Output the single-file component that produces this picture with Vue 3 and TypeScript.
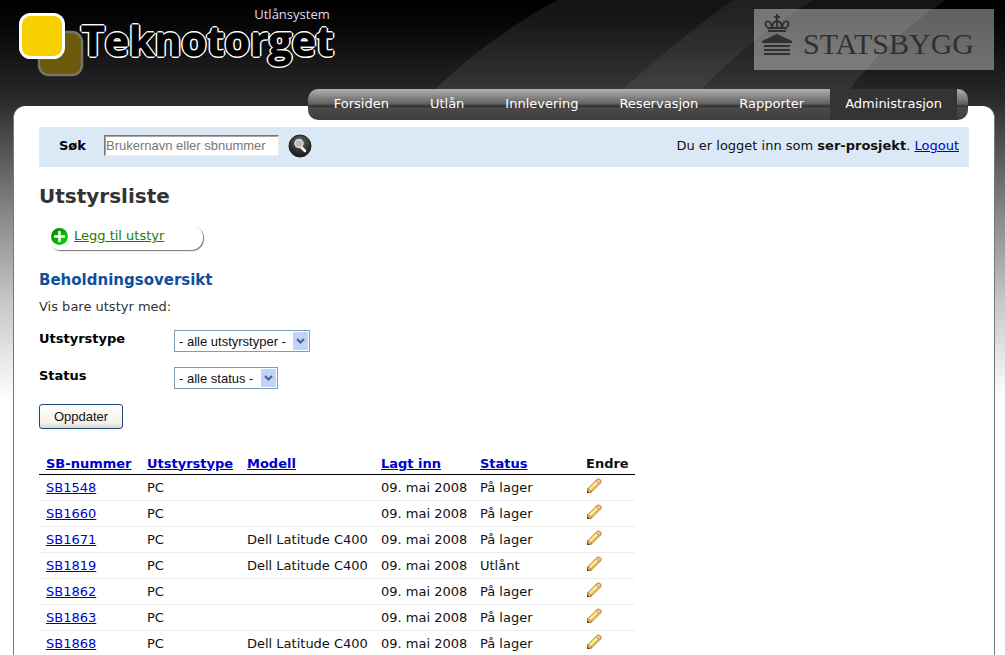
<script setup lang="ts">
import { ref } from 'vue'

interface Item {
  id: string
  type: string
  model: string
  added: string
  status: string
}

const nav = ['Forsiden', 'Utlån', 'Innlevering', 'Reservasjon', 'Rapporter', 'Administrasjon']
const active = 'Administrasjon'
const columns = ['SB-nummer', 'Utstyrstype', 'Modell', 'Lagt inn', 'Status']

const query = ref('')

function pc(id: string, model = '', status = 'På lager'): Item {
  return { id, type: 'PC', model, added: '09. mai 2008', status }
}

const items: Item[] = [
  pc('SB1548'),
  pc('SB1660'),
  pc('SB1671', 'Dell Latitude C400'),
  pc('SB1819', 'Dell Latitude C400', 'Utlånt'),
  pc('SB1862'),
  pc('SB1863'),
  pc('SB1868', 'Dell Latitude C400'),
]
</script>

<template>
  <div class="page">
    <svg class="swoosh" width="1005" height="100" viewBox="0 0 1005 100" aria-hidden="true">
      <path d="M424 100Q483 40 557 0H945Q880 45 842 100Z" fill="#fff" fill-opacity=".08" />
      <path d="M611 100Q670 45 733 0H813Q740 45 692 100Z" fill="#fff" fill-opacity=".06" />
    </svg>

    <header class="top">
      <div class="brand">
        <svg class="mark" width="66" height="66" viewBox="0 0 66 66" aria-hidden="true">
          <rect x="20" y="19" width="43" height="43" rx="10" fill="#6b5a0c" stroke="#77736a" stroke-width="2.5" />
          <rect x="1.500" y="1.500" width="43" height="43" rx="10" fill="#f8d000" stroke="#fff" stroke-width="3" />
        </svg>
        <div class="words">
          <span class="sub">Utlånsystem</span>
          <span class="name">Teknotorget</span>
        </div>
      </div>
      <div class="owner">
        <svg width="30" height="44" viewBox="0 0 30 44" aria-hidden="true">
          <g fill="#303030">
            <path d="M14 0h2v2h2v2h-2v3h-2V4h-2V2h2z" />
            <path d="M6 16h18v2H6z" />
            <path d="M0 29v-2L15 20l15 7v2zM2 31h26v2H2zM2 35h26v2H2zM2 39h26v2H2z" />
          </g>
          <path
            d="M7 15Q2 11 4 8Q7 6 9 10L10 15M15 15V7M11 15Q9 8 15 7Q21 8 19 15M23 15Q28 11 26 8Q23 6 21 10L20 15M6 14H24"
            fill="none" stroke="#303030" stroke-width="1.800"
          />
        </svg>
        <span>STATSBYGG</span>
      </div>
    </header>

    <nav class="nav">
      <a v-for="n in nav" :key="n" href="#" :class="{ on: n === active }">{{ n }}</a>
    </nav>

    <main class="panel">
      <div class="bar">
        <form class="search" @submit.prevent>
          <label for="q">Søk</label>
          <input id="q" v-model="query" type="text" placeholder="Brukernavn eller sbnummer" />
          <button type="submit" aria-label="Søk">
            <svg width="24" height="24" viewBox="0 0 24 24" aria-hidden="true">
              <defs>
                <radialGradient id="lens" cx=".5" cy=".3" r=".7">
                  <stop offset="0" stop-color="#666" />
                  <stop offset="1" stop-color="#151515" />
                </radialGradient>
              </defs>
              <circle cx="12" cy="12" r="11" fill="url(#lens)" stroke="#222" />
              <path d="M13 13l4 4" stroke="#fff" stroke-width="2.500" stroke-linecap="round" />
              <circle cx="11" cy="9.500" r="4" fill="#bbb" stroke="#ddd" stroke-width="1.500" />
            </svg>
          </button>
        </form>
        <p>Du er logget inn som <b>ser-prosjekt</b>. <a href="#">Logout</a></p>
      </div>

      <h1>Utstyrsliste</h1>

      <a class="add" href="#">
        <svg width="17" height="17" viewBox="0 0 17 17" aria-hidden="true">
          <defs>
            <linearGradient id="green" x1="0" y1="0" x2="1" y2="1">
              <stop offset="0" stop-color="#077d07" />
              <stop offset="1" stop-color="#0be00b" />
            </linearGradient>
          </defs>
          <circle cx="8.500" cy="8.500" r="8.500" fill="url(#green)" />
          <path d="M8.500 4v9M4 8.500h9" stroke="#fff" stroke-width="2.500" stroke-linecap="round" />
        </svg>
        <span>Legg til utstyr</span>
      </a>

      <h2>Beholdningsoversikt</h2>
      <p class="hint">Vis bare utstyr med:</p>

      <form class="filters" @submit.prevent>
        <div class="field">
          <label for="type">Utstyrstype</label>
          <div class="pick wide">
            <select id="type"><option>- alle utstyrstyper -</option></select>
            <svg width="15" height="18" viewBox="0 0 15 18" aria-hidden="true">
              <rect width="15" height="18" rx="1" fill="#c1d3fb" />
              <path d="M4 7l3.500 3.500L11 7" fill="none" stroke="#4d6185" stroke-width="2" />
            </svg>
          </div>
        </div>
        <div class="field">
          <label for="status">Status</label>
          <div class="pick">
            <select id="status"><option>- alle status -</option></select>
            <svg width="15" height="18" viewBox="0 0 15 18" aria-hidden="true">
              <rect width="15" height="18" rx="1" fill="#c1d3fb" />
              <path d="M4 7l3.500 3.500L11 7" fill="none" stroke="#4d6185" stroke-width="2" />
            </svg>
          </div>
        </div>
        <button class="update" type="submit">Oppdater</button>
      </form>

      <table>
        <colgroup>
          <col class="c-id" /><col class="c-type" /><col class="c-model" />
          <col class="c-date" /><col class="c-status" /><col class="c-edit" />
        </colgroup>
        <thead>
          <tr>
            <th v-for="c in columns" :key="c"><a href="#">{{ c }}</a></th>
            <th>Endre</th>
          </tr>
        </thead>
        <tbody>
          <tr v-for="i in items" :key="i.id">
            <td><a href="#">{{ i.id }}</a></td>
            <td>{{ i.type }}</td>
            <td>{{ i.model }}</td>
            <td>{{ i.added }}</td>
            <td>{{ i.status }}</td>
            <td>
              <a class="edit" href="#" :aria-label="'Endre ' + i.id">
                <svg width="16" height="16" viewBox="0 0 16 16" aria-hidden="true">
                  <path d="M1.500 14.500L2 10.500L11 1.500Q13 .5 14.500 2Q15.500 3.500 14.500 5L5.500 14Z" fill="#f7d66b" stroke="#bd8430" />
                  <path d="M3.500 11.500L11.500 3.500" stroke="#fff0a8" stroke-width="1.500" />
                  <path d="M5 13L13 5" stroke="#e2ad40" />
                  <path d="M11 1.500Q13 .5 14.500 2Q15.500 3.500 14.500 5L13.500 6L10 2.500Z" fill="#efc2a0" stroke="#c58d62" />
                  <path d="M1.500 14.500L2 10.500L5.500 14Z" fill="#f5dfc0" stroke="#a86f2e" />
                  <path d="M1 15l.5-2.500L3.500 14.500Z" fill="#3b2d20" />
                </svg>
              </a>
            </td>
          </tr>
        </tbody>
      </table>
    </main>
  </div>
</template>

<style>
html {
  scrollbar-width: none;
}
body {
  margin: 0;
}
</style>

<style scoped>
.page {
  position: relative;
  min-height: 100vh;
  box-sizing: border-box;
  padding: 0 10px 0 13px;
  font: 13px/18px Verdana, "DejaVu Sans", sans-serif;
  color: #111;
  background: linear-gradient(#000 0, #040404 20px, #2a2a2a 100px, #444 130px, #888 215px, #c6c6c6 300px, #fff 400px);
}
.swoosh {
  position: absolute;
  top: 0;
  left: 0;
}
a {
  color: #00c;
}
h1, h2, p {
  margin: 0;
}
.top {
  position: relative;
  display: flex;
  justify-content: space-between;
  height: 89px;
}
.brand {
  display: flex;
  padding-left: 6px;
}
.mark {
  margin-top: 13px;
}
.words {
  display: flex;
  flex-direction: column;
  margin-left: -4px;
  padding-top: 6px;
  font-family: "Open Sans", sans-serif;
}
.sub {
  align-self: flex-end;
  padding-right: 4px;
  font-size: 13px;
  line-height: 16px;
  color: #dde;
}
.name {
  font-size: 41px;
  line-height: 36px;
  font-weight: 700;
  color: #000;
  -webkit-text-stroke: 1px #000;
  text-shadow: 2px 0 #fff, -2px 0 #fff, 0 2px #fff, 0 -2px #fff, 1px 1px #fff, -1px 1px #fff, 1px -1px #fff, -1px -1px #fff;
}
.owner {
  display: flex;
  align-items: center;
  gap: 11px;
  box-sizing: border-box;
  width: 240px;
  height: 61px;
  margin: 9px 1px 0 0;
  padding: 0 8px;
  background: rgba(255, 255, 255, .38);
  font: 30px/40px "Liberation Serif", serif;
  color: #303030;
}
.owner span {
  padding-top: 8px;
}
.owner svg {
  flex: none;
  margin-bottom: 8px;
}
.nav {
  position: relative;
  z-index: 1;
  display: flex;
  gap: 11px;
  width: fit-content;
  margin: 0 27px 0 auto;
  padding: 0 11px;
  border-radius: 10px;
  background: linear-gradient(#b0b0b0 0, #606060 15px, #303030 17px, #4c4948 19px, #403d3c 31px);
}
.nav a {
  padding: 0 15px 2px;
  line-height: 29px;
  color: #fff;
  text-decoration: none;
}
.nav .on {
  background: #343434;
}
.panel {
  box-sizing: border-box;
  min-height: calc(100vh - 106px);
  margin-top: -14px;
  padding: 21px 25px 0;
  border: solid #777;
  border-width: 0 1px;
  border-radius: 12px 12px 0 0;
  background: #fff;
}
.bar {
  display: flex;
  justify-content: space-between;
  align-items: center;
  height: 40px;
  padding: 0 10px 0 20px;
  background: #dbe9f7;
}
.bar p {
  padding-bottom: 2px;
}
.search {
  display: flex;
  align-items: center;
  padding-bottom: 3px;
}
.search label {
  width: 45px;
  font-weight: 700;
  color: #000;
}
.search input {
  box-sizing: border-box;
  width: 175px;
  height: 21px;
  padding: 0 1px;
  border: 1px solid;
  border-color: #777 #eee #eee #777;
  box-shadow: inset 1px 1px #aaa59a;
  background: #fff;
  font: 13px "Liberation Sans", Arial, sans-serif;
}
.search input::placeholder {
  color: #777;
}
.search button {
  display: flex;
  margin-left: 9px;
  padding: 0;
  border: 0;
  background: none;
}
h1 {
  margin-top: 16px;
  font-size: 20px;
  line-height: 26px;
  color: #333;
}
.add {
  display: flex;
  gap: 6px;
  box-sizing: border-box;
  width: 152px;
  height: 25px;
  margin: 16px 0 0 12px;
  border-radius: 8px 12px 12px 8px;
  box-shadow: 1px 1px 1px #777;
  color: #1a7d0a;
}
.add svg {
  margin-top: 3px;
}
.add span {
  line-height: 22px;
}
h2 {
  margin-top: 18px;
  font-size: 15px;
  line-height: 24px;
  color: #0e4f9e;
}
.hint {
  margin-top: 6px;
  color: #333;
}
.filters {
  margin-top: 14px;
}
.field {
  display: flex;
  height: 37px;
}
.field label {
  width: 135px;
  font-weight: 700;
  color: #000;
}
.pick {
  position: relative;
  width: 104px;
}
.pick.wide {
  width: 136px;
}
.pick select {
  appearance: none;
  box-sizing: border-box;
  width: 100%;
  height: 22px;
  padding: 0 0 0 4px;
  border: 1px solid #7f9db9;
  border-radius: 0;
  background: #fff;
  font: 13px "Liberation Sans", Arial, sans-serif;
  color: #111;
}
.pick svg {
  position: absolute;
  top: 2px;
  right: 2px;
  pointer-events: none;
}
.update {
  display: block;
  width: 84px;
  height: 25px;
  padding: 0;
  border: 1px solid #1d4a7a;
  border-radius: 3px;
  background: linear-gradient(#fff, #f3f2ec 75%, #dcd8cc);
  font: 13px "Liberation Sans", Arial, sans-serif;
  color: #111;
}
table {
  table-layout: fixed;
  width: 596px;
  margin-top: 24px;
  border-collapse: separate;
  border-spacing: 0;
}
.c-id { width: 101px; }
.c-type { width: 100px; }
.c-model { width: 134px; }
.c-date { width: 99px; }
.c-status { width: 106px; }
.c-edit { width: 56px; }
th, td {
  padding: 0 0 0 7px;
  text-align: left;
  white-space: nowrap;
}
th {
  height: 21px;
  border-bottom: 1px solid #000;
}
td {
  height: 25px;
  border-bottom: 1px solid #eee;
}
.edit svg {
  display: block;
  margin-bottom: 3px;
}
</style>
